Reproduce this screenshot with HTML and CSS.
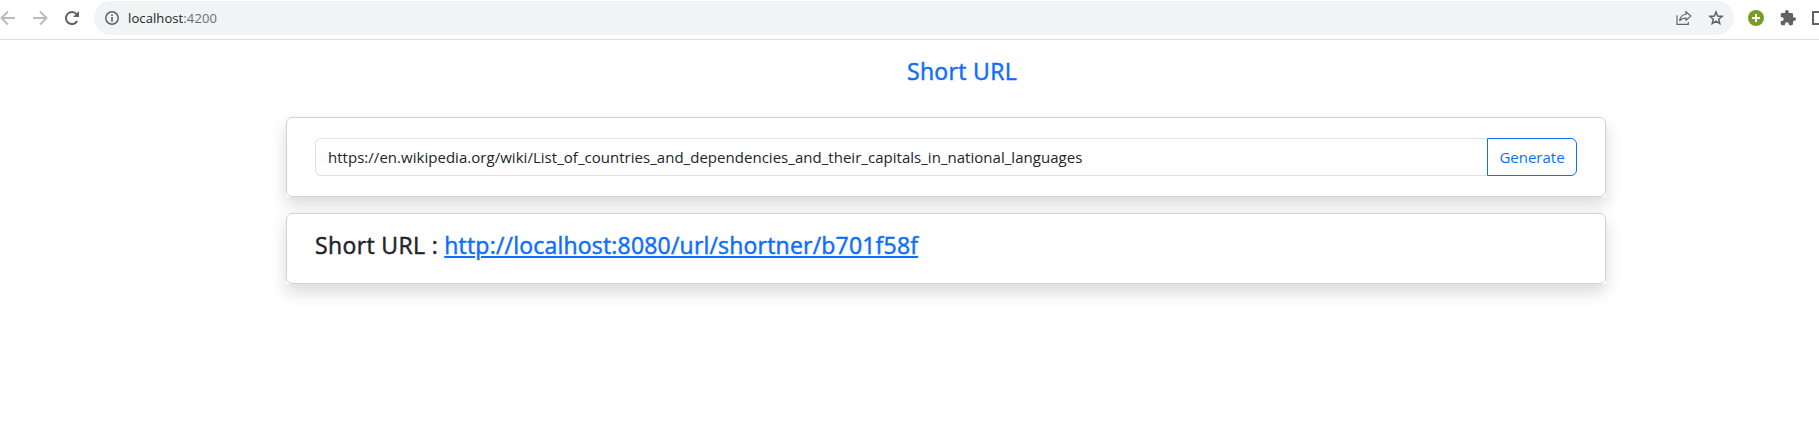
FILE: index.html
```html
<!DOCTYPE html>
<html lang="en">
<head>
<meta charset="utf-8">
<title>Short URL</title>
<link rel="stylesheet" href="styles.css">
</head>
<body>
<header class="toolbar">
  <svg class="nav back" width="16" height="16" viewBox="0 0 16 16"><path d="M15 8H2M8 1.5L1.5 8L8 14.5"/></svg>
  <svg class="nav forward" width="16" height="16" viewBox="0 0 16 16"><path d="M1 8H14M8 1.5L14.5 8L8 14.5"/></svg>
  <svg class="reload" width="16" height="16" viewBox="0 0 16 16"><path d="M13.2 11A6 6 0 1 1 12.6 4.2" fill="none" stroke="#5f6368" stroke-width="2"/><path d="M15 1V7H9Z" fill="#5f6368"/></svg>
  <div class="address">
    <svg class="info" width="14" height="14" viewBox="0 0 14 14"><circle cx="7" cy="7" r="6.2" fill="none" stroke="#5f6368" stroke-width="1.5"/><path d="M6.2 3.3H7.8V4.9H6.2ZM6.2 6.1H7.8V10.7H6.2Z" fill="#5f6368"/></svg>
    <span class="host">localhost<span class="port">:4200</span></span>
    <svg class="share" width="16" height="16" viewBox="0 0 16 16" fill="none" stroke="#5f6368" stroke-width="1.15"><path d="M1 5.2V14.4H12.3V12M10 1.8L14.8 6L10 10.2V8C7.3 8 5.1 8.8 3.5 10.9C4.1 7.3 6.4 4.6 10 4.2Z"/></svg>
    <svg class="star" width="16" height="16" viewBox="0 0 16 16" fill="none" stroke="#5f6368" stroke-width="1.5"><path d="M8 2L9.7 6.1L14.1 6.4L10.7 9.2L11.8 13.6L8 11.2L4.2 13.6L5.3 9.2L1.9 6.4L6.3 6.1Z"/></svg>
  </div>
  <svg class="plus" width="16" height="16" viewBox="0 0 16 16"><circle cx="8" cy="8" r="8" fill="#769e24"/><path d="M8 4V12M4 8H12" stroke="#fff" stroke-width="2"/></svg>
  <svg class="puzzle" width="16" height="16" viewBox="1 1 22 22"><path fill="#5f6368" d="M20.5 11H19V7a2 2 0 0 0-2-2h-4V3.500a2.500 2.500 0 0 0-5 0V5H4a2 2 0 0 0-2 2v3.800h1.500a2.700 2.700 0 0 1 0 5.400H2V20a2 2 0 0 0 2 2h3.800v-1.500a2.700 2.700 0 0 1 5.400 0V22H17a2 2 0 0 0 2-2v-4h1.500a2.500 2.500 0 0 0 0-5z"/></svg>
  <span class="panel-icon"></span>
</header>
<main>
  <h1 class="title">Short URL</h1>
  <section class="shadow">
    <form class="card form-card">
      <input class="url-input" type="text" value="https://en.wikipedia.org/wiki/List_of_countries_and_dependencies_and_their_capitals_in_national_languages">
      <button class="generate" type="button">Generate</button>
    </form>
  </section>
  <section class="shadow">
    <div class="card result-card"><h2 class="result"><span class="label">Short URL :</span> <a class="link" href="#">http://localhost:8080/url/shortner/b701f58f</a></h2></div>
  </section>
</main>
</body>
</html>
```
FILE: styles.css
```css
* { box-sizing: border-box; }
body { margin: 0; min-height: 440px; background: #fff; color: #212529; font-family: "Segoe UI", "Open Sans", "Noto Sans", sans-serif; }
svg { display: block; flex: none; }
.toolbar { display: flex; align-items: center; height: 40px; padding-bottom: 3px; border-bottom: 1px solid #dadce0; overflow: hidden; }
.nav { fill: none; stroke: #babcbe; stroke-width: 2; }
.forward { margin-left: 16px; }
.reload { margin-left: 16px; }
.address { display: flex; align-items: center; width: 1640px; height: 34px; margin-left: 14px; padding: 0 10px 0 11px; border-radius: 17px; background: #f1f3f4; flex: none; }
.host { margin-left: 9px; font-size: 13px; letter-spacing: 0.1px; line-height: 18px; }
.port { color: #6a6e73; }
.share { margin-left: auto; }
.star { margin-left: 16px; }
.plus { margin-left: 14px; }
.puzzle { margin-left: 16px; }
.panel-icon { width: 16px; height: 14px; margin-left: 16px; border: 2px solid #5f6368; flex: none; }
main { width: 1320px; margin-left: 286px; }
.title { margin: 0; padding: 17px 0 31px 32px; text-align: center; font-size: 23px; font-weight: 500; line-height: 29px; letter-spacing: 0.32px; color: #0d6efd; -webkit-text-stroke: 0.5px currentColor; }
.shadow { margin-bottom: 16px; box-shadow: 0 8px 16px rgba(0, 0, 0, .15); }
.card { border: 1px solid #d0d1d2; border-radius: 6px; background: #fff; }
.form-card { display: flex; height: 80px; padding: 20px 28px; }
.url-input { flex: 1; height: 38px; padding: 0 12px; border: 1px solid #dee2e6; border-right: 0; border-radius: 6px 0 0 6px; outline: 0; background: #fff; color: #212529; font: 15px "Segoe UI", "Open Sans", sans-serif; letter-spacing: 0.03px; }
.generate { width: 90px; height: 38px; padding: 0; border: 1px solid #0d6efd; border-radius: 0 6px 6px 0; background: #fff; color: #0d6efd; font: 15px "Segoe UI", "Open Sans", sans-serif; }
.result-card { height: 71px; padding: 17px 28px; }
.result { margin: 0; font-size: 23px; font-weight: 500; line-height: 29px; letter-spacing: 0.2px; white-space: nowrap; -webkit-text-stroke: 0.5px currentColor; }
.label { letter-spacing: 0.36px; }
.link { color: #0d6efd; text-decoration: underline; text-decoration-thickness: 2px; text-underline-offset: 2px; }
```
